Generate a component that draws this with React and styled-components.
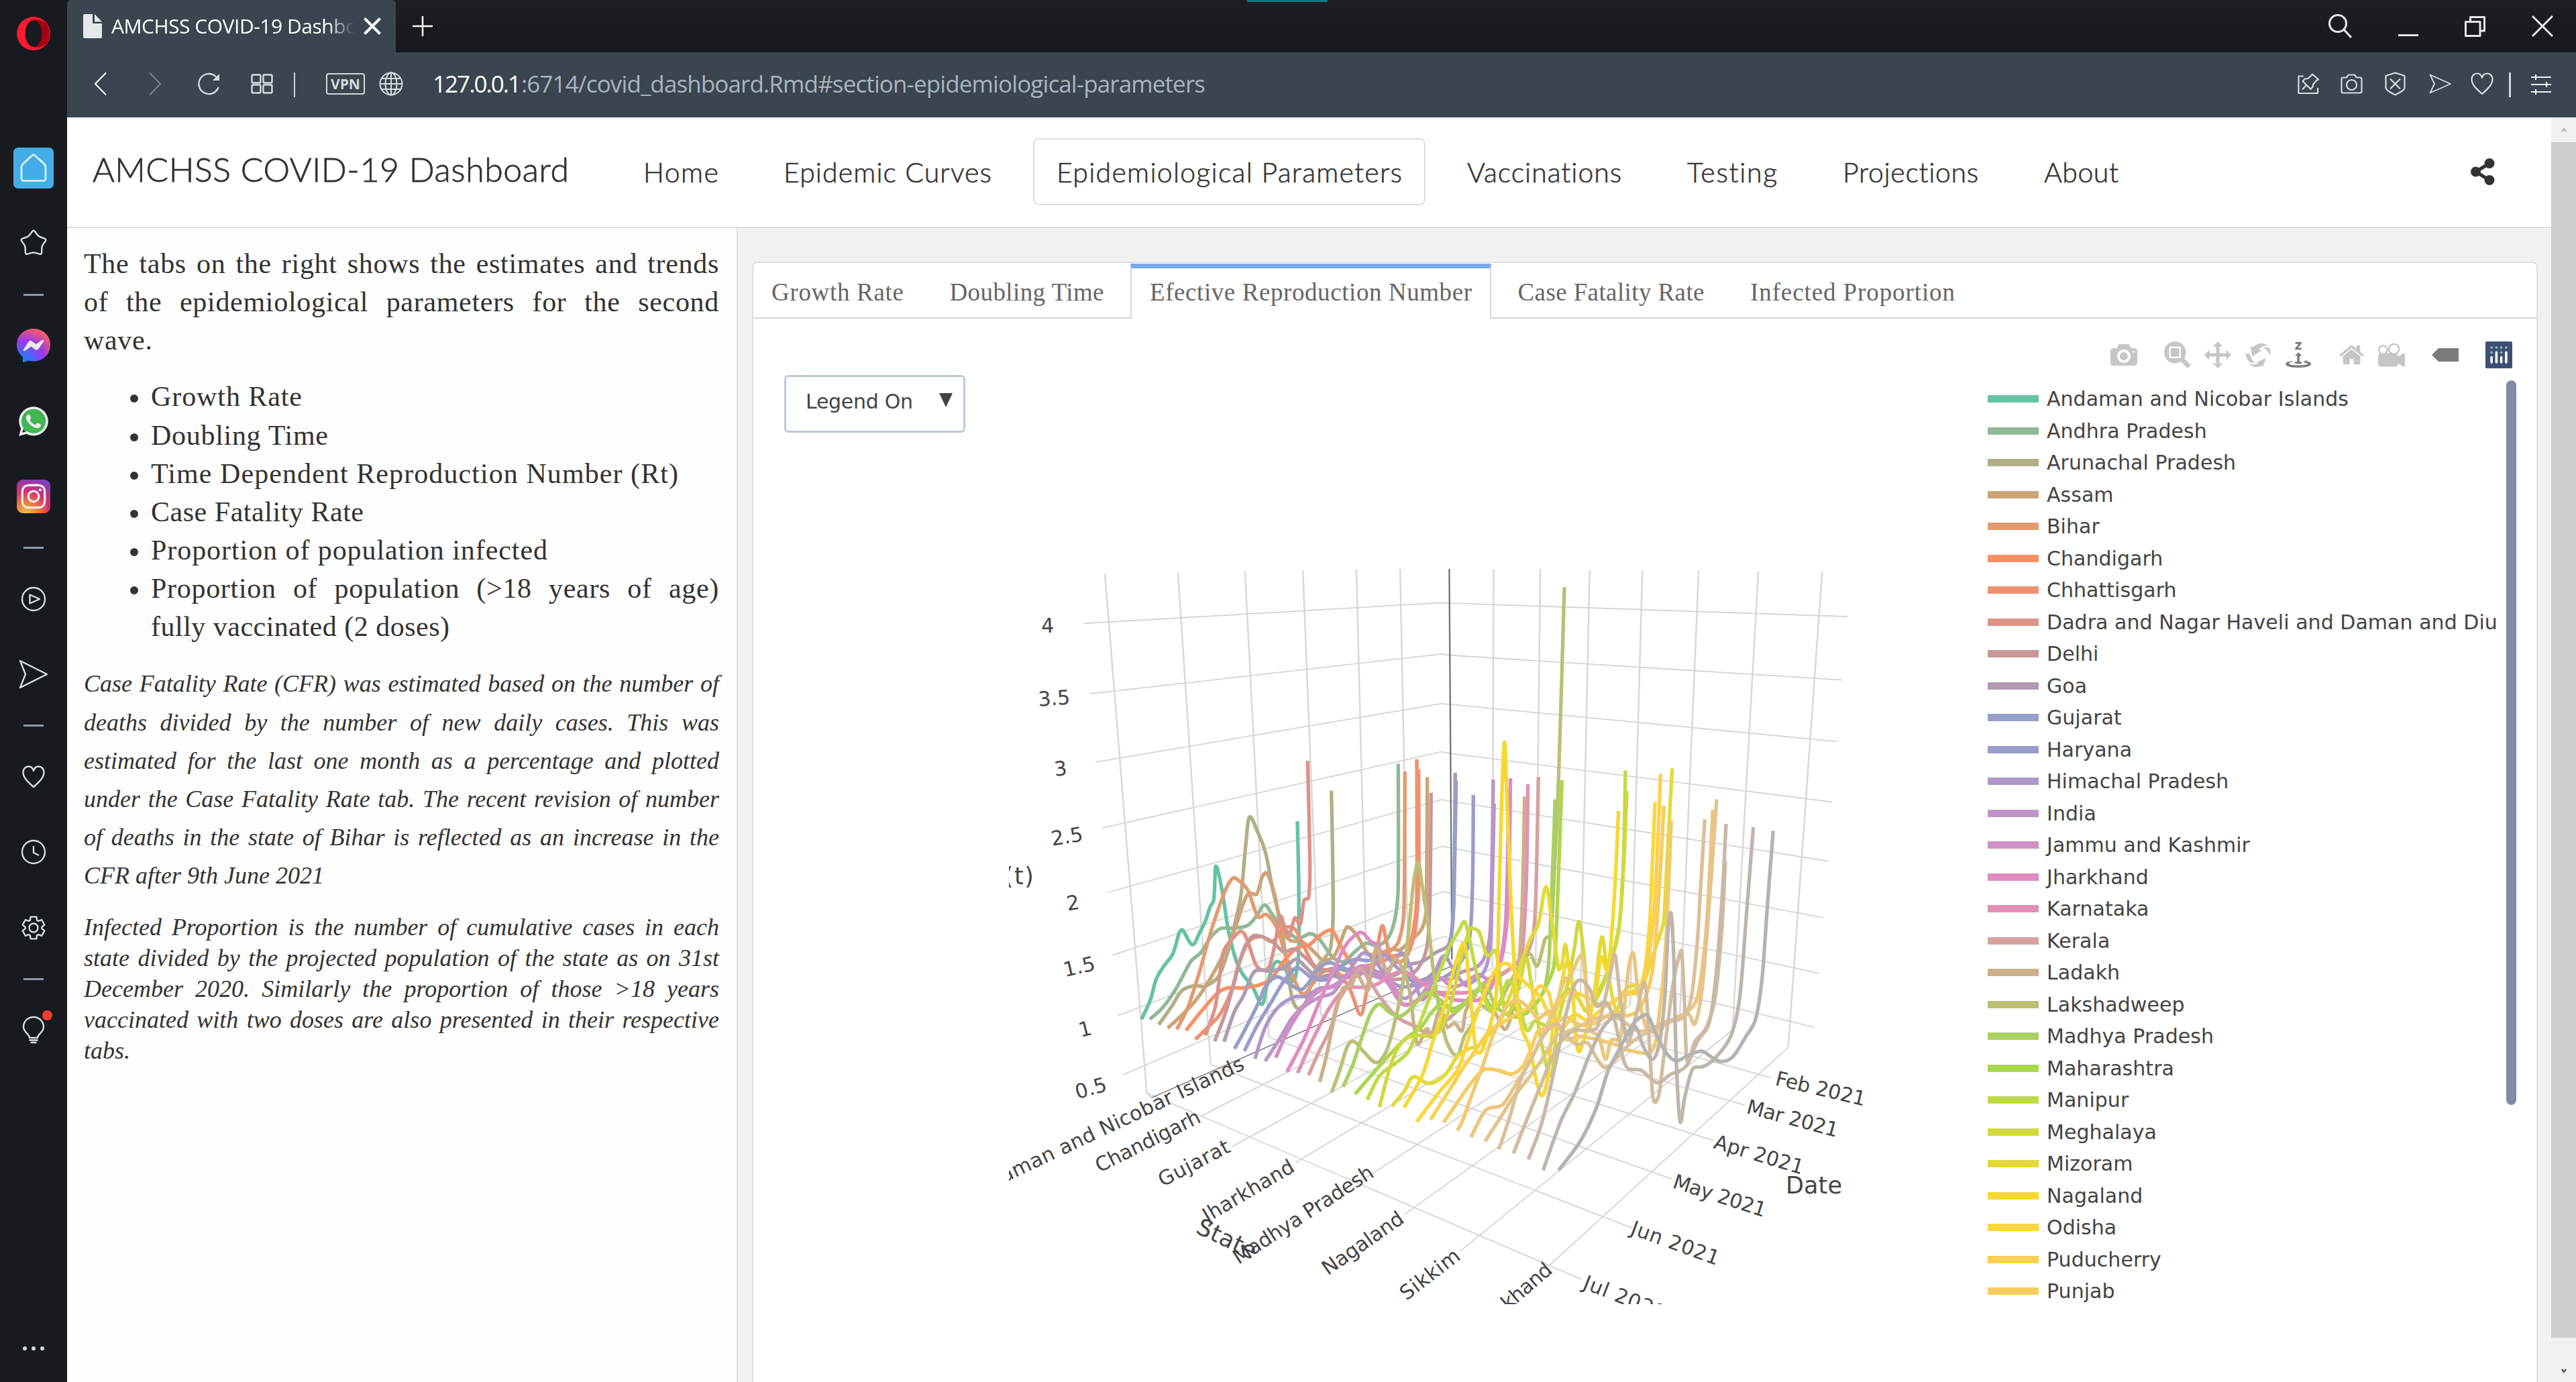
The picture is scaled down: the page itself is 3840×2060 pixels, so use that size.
import React, { useLayoutEffect, useRef, useState } from 'react';
import styled, { createGlobalStyle, css } from 'styled-components';
import { FaWhatsapp, FaInstagram } from 'react-icons/fa';

const sans = '"Open Sans", "Noto Sans", sans-serif';
const brandFont = 'Lato, "Open Sans", sans-serif';
const serif = '"Liberation Serif", serif';
const verdana = '"DejaVu Sans", sans-serif';

const Global = createGlobalStyle`
  *, *::before, *::after { box-sizing: border-box; }
  html, body { margin: 0; padding: 0; width: 3840px; height: 2060px; overflow: hidden; background: #fff; }
  svg { display: block; flex: none; }
`;

/* ---------- text that spreads its letters over a given width ---------- */

const FitText = styled.span`
  display: inline-block;
  letter-spacing: 0;
  white-space: pre;
`;

function Fit({ w, children }) {
  const ref = useRef(null);
  const [spacing, setSpacing] = useState(null);
  useLayoutEffect(() => {
    const natural = ref.current.getBoundingClientRect().width;
    setSpacing((w - natural) / (children.length - 1));
  }, [w, children]);
  return (
    <FitText ref={ref} style={spacing === null ? undefined : { letterSpacing: `${spacing}px`, width: w }}>
      {children}
    </FitText>
  );
}

/* ---------- browser frame ---------- */

const Screen = styled.div`
  display: flex;
  width: 3840px;
  height: 2060px;
  overflow: hidden;
  background: #fff;
  color: #333;
`;

const Rail = styled.aside`
  flex: none;
  width: 100px;
  display: flex;
  flex-direction: column;
  background: #171b1f;
`;

const RailLogo = styled.div`
  height: 194px;
  padding: 25px;
`;

const RailSlot = styled.div`
  position: relative;
  height: 112.5px;
  display: flex;
  align-items: center;
  justify-content: center;
`;

const RailDash = styled.div`
  height: 40px;
  display: flex;
  align-items: center;
  justify-content: center;
  &::before { content: ''; width: 30px; height: 3px; background: #8c9ba6; }
`;

const HomeTile = styled.div`
  width: 60px;
  height: 61px;
  display: flex;
  align-items: center;
  justify-content: center;
  border-radius: 7px;
  background: #45ade6;
`;

const InstaTile = styled.div`
  width: 50px;
  height: 50px;
  display: flex;
  align-items: center;
  justify-content: center;
  border-radius: 9px;
  color: #ececec;
  background: radial-gradient(circle at 28% 105%, #f5c85a 0%, #f0803a 28%, #d62f6c 55%, #8a3ab9 85%, #5b51d8 100%);
`;

const WhatsTile = styled.div`
  width: 48px;
  height: 48px;
  display: flex;
  align-items: center;
  justify-content: center;
  color: #ececec;
  background: radial-gradient(circle at 50% 50%, #3fb650 0 19px, transparent 20px);
`;

const RailDots = styled.div`
  margin-top: auto;
  height: 100px;
  display: flex;
  align-items: center;
  justify-content: center;
  gap: 7px;
`;

const RailDot = styled.span`
  width: 6px;
  height: 6px;
  border-radius: 50%;
  background: #d5dbdf;
`;

const Alert = styled.span`
  position: absolute;
  left: 63px;
  top: 27px;
  width: 15px;
  height: 15px;
  border-radius: 50%;
  background: #ff3b2f;
`;

const Window = styled.div`
  flex: 1;
  min-width: 0;
  display: flex;
  flex-direction: column;
`;

const TabStrip = styled.div`
  position: relative;
  height: 78px;
  display: flex;
  background: linear-gradient(#1c2023, #15181d);
`;

const LoadMark = styled.span`
  position: absolute;
  left: 1759px;
  top: 0;
  width: 120px;
  height: 3px;
  background: #17757c;
`;

const BrowserTab = styled.div`
  width: 490px;
  display: flex;
  align-items: center;
  padding-left: 24px;
  background: #3a4550;
  border-radius: 6px 6px 0 0;
`;

const TabTitle = styled.div`
  width: 362px;
  margin-left: 14px;
  overflow: hidden;
  font: 30px/76px ${sans};
  color: #fff;
  mask-image: linear-gradient(90deg, #000 322px, transparent 362px);
`;

const TabClose = styled.div`
  margin-left: 13px;
`;

const NewTab = styled.div`
  display: flex;
  align-items: center;
  padding-left: 25px;
`;

const WindowButtons = styled.div`
  margin-left: auto;
  display: flex;
  align-items: center;
  padding-right: 34px;
  svg + svg { margin-left: 69px; }
`;

const AddressBar = styled.div`
  height: 97px;
  display: flex;
  align-items: center;
  padding-bottom: 3px;
  background: #3a4550;
`;

const Spot = styled.div`
  margin-left: ${(p) => p.$gap}px;
  display: flex;
  align-items: center;
`;

const Divider = styled.span`
  width: ${(p) => p.$w || 2}px;
  height: 37px;
  margin-left: ${(p) => p.$gap}px;
  margin-top: 3px;
  background: #cdd3d8;
`;

const Vpn = styled.div`
  width: 58px;
  height: 32px;
  margin-left: 46px;
  border: 2px solid #d3dadb;
  border-radius: 4px;
  text-align: center;
  font: bold 21px/28px ${sans};
  color: #d3dadb;
`;

const Url = styled.div`
  margin-left: 44px;
  padding-bottom: 1px;
  font: 35px/88px ${sans};
  color: #a9b4be;
  white-space: pre;
`;

const UrlHost = styled.span`
  color: #fff;
`;

const BarTools = styled.div`
  margin-left: auto;
  display: flex;
  align-items: center;
  padding-right: 36px;
`;

/* ---------- page ---------- */

const PageRow = styled.div`
  flex: 1;
  display: flex;
  min-height: 0;
`;

const Page = styled.div`
  width: 3703px;
  display: flex;
  flex-direction: column;
`;

const ScrollTrack = styled.div`
  flex: 1;
  display: flex;
  flex-direction: column;
  background: #f0f0f0;
`;

const ScrollArrow = styled.div`
  height: ${(p) => p.$h}px;
  display: flex;
  align-items: center;
  justify-content: center;
`;

const ScrollThumb = styled.div`
  flex: 1;
  background: #cdcdcd;
`;

const Navbar = styled.header`
  height: 165px;
  display: flex;
  align-items: flex-start;
  padding: 31px 84px 0 38px;
  border-bottom: 2px solid #dcdcdc;
  background: #fff;
`;

const Brand = styled.div`
  width: 786px;
  font: 300 50px/92px ${brandFont};
  -webkit-text-stroke: 0.8px #333;
  color: #333;
`;

const NavItem = styled.a`
  height: 100px;
  margin-right: 27px;
  padding: 0 33px;
  border: 2px solid ${(p) => (p.$active ? '#dcdcdc' : 'transparent')};
  border-radius: 9px;
  font: 300 41px/97px ${brandFont};
  -webkit-text-stroke: 0.6px #333;
  color: #333;
`;

const Share = styled.div`
  margin: 30px 0 0 auto;
`;

const Body = styled.div`
  flex: 1;
  display: flex;
  min-height: 0;
  background: #f1f1f1;
`;

const Sidebar = styled.section`
  flex: none;
  width: 1000px;
  padding: 25px 26px 0 25px;
  border-right: 2px solid #e0e0e0;
  background: #fdfdfd;
  font-family: ${serif};
  color: #333;
`;

const Para = styled.p`
  margin: 0 0 25px;
  letter-spacing: 0.7px;
  font-size: 42px;
  line-height: 57.14px;
  ${(p) => p.$italic && css`
    font-style: italic;
    font-size: 36px;
    letter-spacing: 0;
  `}
  ${(p) => p.$tight && css`
    line-height: 46px;
  `}
`;

const Line = styled.span`
  display: block;
  white-space: nowrap;
  text-align-last: ${(p) => (p.$last ? 'left' : 'justify')};
`;

const Bullets = styled.ul`
  margin: 0 0 28px;
  padding: 2px 0 0 0;
  list-style: none;
`;

const Bullet = styled.li`
  display: flex;
  font-size: 42px;
  line-height: 57.14px;
  letter-spacing: 0.7px;
  &::before {
    content: '';
    flex: none;
    width: 12px;
    height: 12px;
    margin: 25px 19px 0 69px;
    border-radius: 50%;
    background: #333;
  }
`;

const BulletText = styled.div`
  flex: 1;
`;

const Panel = styled.section`
  flex: 1;
  display: flex;
  flex-direction: column;
  margin: 50px 20px 0 21px;
  border: 2px solid #e0e0e0;
  border-bottom: 0;
  border-radius: 8px 8px 0 0;
  background: #fff;
`;

const PanelTabs = styled.nav`
  display: flex;
  gap: 10.5px;
  height: 83px;
  padding-top: 1px;
  border-bottom: 2px solid #d5d5d5;
`;

const PanelTab = styled.a`
  height: 82px;
  margin-left: ${(p) => (p.$first ? -2 : 0)}px;
  padding: 0 27px;
  border: solid transparent;
  border-width: 7px 2px 0;
  font: 37px/72px ${serif};
  color: #666;
  ${(p) => p.$active && css`
    border-color: #7aa7f3 #d5d5d5 transparent;
    background: #fff;
  `}
`;

const ChartRow = styled.div`
  flex: 1;
  display: flex;
`;

const Controls = styled.div`
  width: 381px;
  padding: 84px 0 0 46px;
`;

const Dropdown = styled.div`
  width: 270px;
  height: 86px;
  display: flex;
  align-items: flex-start;
  justify-content: space-between;
  padding: 0 16px 0 29px;
  border: 3px solid #bec8d9;
  border-radius: 6px;
  font: 30px/74px ${verdana};
  color: #444;
`;

const DropArrow = styled.span`
  width: 0;
  height: 0;
  margin-top: 24px;
  border: solid transparent;
  border-width: 21px 10px 0;
  border-top-color: #444;
`;

const SceneBox = styled.div`
  width: 1459px;
  padding-top: 365px;
`;

const LegendSide = styled.div`
  flex: 1;
`;

const ModeBar = styled.div`
  height: 92px;
  display: flex;
  justify-content: flex-end;
  gap: 40px;
  padding: 34px 36px 0 0;
`;

const ModeGroup = styled.div`
  display: flex;
  gap: 20px;
`;

const LegendRow = styled.div`
  display: flex;
  justify-content: space-between;
  padding-right: 30px;
`;

const LegendList = styled.div`
  padding-top: 4px;
`;

const LegendItem = styled.div`
  height: 47.5px;
  display: flex;
  align-items: center;
  font: 30px/47px ${verdana};
  letter-spacing: 0.04px;
  color: #444;
  white-space: nowrap;
`;

const Swatch = styled.span`
  width: 76px;
  height: 11px;
  margin-right: 12px;
  background: ${(p) => p.$color};
`;

const LegendScroll = styled.div`
  width: 15px;
  height: 1080px;
  border-radius: 8px;
  background: #808ba4;
`;

/* ---------- icons ---------- */

const Glyph = ({ w, h = w, d, s = 2.4, c = '#d8dde1', children }) => (
  <svg width={w} height={h} viewBox={`0 0 ${w} ${h}`} fill="none" stroke={c} strokeWidth={s} strokeLinejoin="round">
    {d && <path d={d} />}
    {children}
  </svg>
);

const heart = 'M17 32C8 24 1.500 18 1.500 10C1.500 5 5 1.500 9.500 1.500C13 1.500 16 4 17 8C18 4 21 1.500 24.500 1.500C29 1.500 32.500 5 32.500 10C32.500 18 26 24 17 32Z';

const gear = (() => {
  const pts = [];
  for (let k = 0; k < 6; k += 1) {
    [[-24, 12.5], [-15, 17], [15, 17], [24, 12.5]].forEach(([a, r]) => {
      const t = ((k * 60 + a - 90) * Math.PI) / 180;
      pts.push(`${(19 + r * Math.cos(t)).toFixed(1)} ${(19 + r * Math.sin(t)).toFixed(1)}`);
    });
  }
  return `M${pts.join('L')}Z`;
})();

const star = (() => {
  const pts = [];
  for (let k = 0; k < 10; k += 1) {
    const r = k % 2 ? 13 : 20.5;
    const t = ((k * 36 - 90) * Math.PI) / 180;
    pts.push([22 + r * Math.cos(t), 22 + r * Math.sin(t)]);
  }
  const mid = (p, q, f) => `${(p[0] + (q[0] - p[0]) * f).toFixed(1)} ${(p[1] + (q[1] - p[1]) * f).toFixed(1)}`;
  const xy = (p) => `${p[0].toFixed(1)} ${p[1].toFixed(1)}`;
  return `${pts.map((p, i) => {
    const prev = pts[(i + 9) % 10];
    const next = pts[(i + 1) % 10];
    return `${i ? 'L' : 'M'}${mid(p, prev, 0.25)}Q${xy(p)} ${mid(p, next, 0.25)}`;
  }).join('')}Z`;
})();

const OperaLogo = () => (
  <svg width="50" height="50" viewBox="0 0 50 50">
    <circle cx="25" cy="25" r="25" fill="#ff1b2d" />
    <path d="M17 9C24 2 37 3 44 10A25 25 0 0 1 44 40C37 47 24 48 17 41Z" fill="#a70014" />
    <ellipse cx="25" cy="25" rx="12.500" ry="19.500" fill="#171b1f" />
  </svg>
);

const Messenger = () => (
  <svg width="50" height="50" viewBox="0 0 50 50">
    <defs>
      <radialGradient id="msg" cx="0.2" cy="1" r="1.150">
        <stop offset="0" stopColor="#0a8cff" />
        <stop offset="0.55" stopColor="#9a35f0" />
        <stop offset="0.85" stopColor="#e8557e" />
        <stop offset="1" stopColor="#ff6968" />
      </radialGradient>
    </defs>
    <path d="M25 0C11 0 0 10 0 24C0 31.500 3.500 37.500 9 42V49C9 50 10 50.300 11 50L16 47.500C19 48.200 22 48.500 25 48.500C39 48.500 50 38 50 24C50 10 39 0 25 0Z" fill="url(#msg)" />
    <path d="M10 31L17.500 19.500C18.700 17.700 21 17.300 22.700 18.600L28.500 23L38 17C39.500 16 41 17.500 40 19L32.500 30C31.300 31.800 29 32.200 27.300 31L21.500 26.500L12 33C10.500 33.700 9 32.500 10 31Z" fill="#ececec" />
  </svg>
);

const MODE = {
  camera: 'm500 450c-83 0-150-67-150-150 0-83 67-150 150-150 83 0 150 67 150 150 0 83-67 150-150 150z m400 150h-120c-16 0-34 13-39 29l-31 93c-6 15-23 28-40 28h-340c-16 0-34-13-39-28l-31-94c-6-15-23-28-40-28h-120c-55 0-100-45-100-100v-450c0-55 45-100 100-100h800c55 0 100 45 100 100v450c0 55-45 100-100 100z m-400-550c-138 0-250 112-250 250 0 138 112 250 250 250 138 0 250-112 250-250 0-138-112-250-250-250z m365 380c-19 0-35 16-35 35 0 19 16 35 35 35 19 0 35-16 35-35 0-19-16-35-35-35z',
  zoom: 'm1000-25l-250 251c40 63 63 138 63 218 0 224-182 406-407 406-224 0-406-182-406-406s183-406 407-406c80 0 155 22 218 62l250-250 125 125z m-812 250l0 438 437 0 0-438-437 0z m62 375l313 0 0-312-313 0 0 312z',
  pan: 'm1000 350l-187 188 0-125-250 0 0 250 125 0-188 187-187-187 125 0 0-250-250 0 0 125-188-188 186-187 0 125 252 0 0-250-125 0 187-188 188 188-125 0 0 250 250 0 0-126 187 188z',
  orbit: 'm922 660c-5 4-9 7-14 11-359 263-580-31-580-31l-102 28 58-400c0 1 1 1 2 2 118 108 351 249 351 249s-62 27-100 42c88 83 222 183 347 122 16-8 30-17 44-27-2 1-4 2-6 4z m36-329c0 0 64 229-88 296-62 27-124 14-175-11 157-78 225-208 249-266 8-19 11-31 11-31 2 5 6 15 11 32-5-13-8-20-8-20z m-775-239c70-31 117-50 198-32-121 80-199 346-199 346l-96-15-58-12c0 0 55-226 155-287z m603 133l-317-139c0 0 4-4 19-14 7-5 24-15 24-15s-177-147-389 4c235-287 536-112 536-112l31-22 100 299-4-1z m-298-153c6-4 14-9 24-15 0 0-17 10-24 15z',
  turntable: 'm833 5l-17 108v41l-130-65 130-66c0 0 0 38 0 39 0-1 36-14 39-25 4-15-6-22-16-30-15-12-39-16-56-20-90-22-187-23-279-23-261 0-341 34-353 59 3 60 228 110 228 110-140-8-351-35-351-116 0-120 293-142 474-142 155 0 477 22 477 142 0 50-74 79-163 96z m-374 94c-58-5-99-21-99-40 0-24 65-43 144-43 79 0 143 19 143 43 0 19-42 34-98 40v216h87l-132 135-133-135h88v-216z m167 515h-136v1c16 16 31 34 46 52l84 109v54h-230v-71h124v-1c-16-17-28-32-44-51l-89-114v-51h245v72z',
  home: 'm786 296v-267q0-15-11-26t-25-10h-214v214h-143v-214h-214q-15 0-25 10t-11 26v267q0 1 0 2t0 2l321 264 321-264q1-1 1-4z m124 39l-34-41q-5-5-12-6h-2q-7 0-12 3l-386 322-386-322q-7-4-13-4-7 2-12 7l-35 41q-4 5-3 13t6 12l401 334q18 15 42 15t43-15l136-114v109q0 8 5 13t13 5h107q8 0 13-5t5-13v-227l122-102q5-5 6-12t-4-13z',
  movie: 'm938 413l-188-125c0 37-17 71-44 94 64 38 107 107 107 187 0 121-98 219-219 219-121 0-219-98-219-219 0-61 25-117 66-156h-115c30 33 49 76 49 125 0 103-84 187-187 187s-188-84-188-187c0-57 26-107 65-141-38-22-65-62-65-109v-250c0-70 56-126 125-126h500c69 0 125 56 125 126l188-126c34 0 62 28 62 63v375c0 35-28 63-62 63z m-750 0c-69 0-125 56-125 125s56 125 125 125 125-56 125-125-56-125-125-125z m406-1c-87 0-157 70-157 157 0 86 70 156 157 156s156-70 156-156-70-157-156-157z',
  tag: 'm375 725l0 0-375-375 375-374 0-1 1125 0 0 750-1125 0z',
};

const ModeIcon = ({ name, vw = 1000, w = 40, on }) => (
  <svg width={w} height="40" viewBox={`0 0 ${vw} 1000`}>
    <path d={MODE[name]} transform="matrix(1 0 0 -1 0 850)" fill={on ? '#7c7c7c' : '#c6c6c6'} />
  </svg>
);

const PlotlyMark = () => (
  <svg width="40" height="40" viewBox="0 0 132 132">
    <rect width="132" height="132" rx="6" fill="#3f4f75" />
    <g fill="#80cfbe">
      {[[30, 30], [54, 30], [78, 30], [102, 30], [30, 54], [78, 54]].map(([x, y]) => (
        <circle key={`${x}-${y}`} cx={x} cy={y} r="6" />
      ))}
    </g>
    <g stroke="#fff" strokeWidth="12" strokeLinecap="round">
      <path d="M30 78V102M54 54V102M78 78V102M102 54V102" />
    </g>
  </svg>
);

/* ---------- 3D scene ---------- */

// Screen frames of the scene: origin and scale of each set of coordinates.
const FRAMES = {
  a: [1680, 1120, 1 / 3, 1 / 3],
  b: [2180, 1120, 1 / 3, 640 / 1568],
  c: [1480, 820, 700 / 1568, 1150 / 1568],
  d: [2130, 820, 700 / 1568, 1150 / 1568],
};

const place = (frame, text) => {
  const [ox, oy, sx, sy] = FRAMES[frame];
  return text.trim().split(/\s+/).map((p) => {
    const [u, v] = p.split(',').map(Number);
    return [ox + u * sx, oy + v * sy];
  });
};

const points = (spec) =>
  spec.split('|').flatMap((part) => place(part.trim()[0], part.trim().slice(1)));

const straight = (spec) => `M${points(spec).map((p) => p.map((n) => n.toFixed(1)).join(' ')).join('L')}`;

const smooth = (spec) => {
  const p = points(spec);
  let d = `M${p[0][0].toFixed(1)} ${p[0][1].toFixed(1)}`;
  for (let i = 0; i < p.length - 1; i += 1) {
    const p0 = p[i - 1] || p[i];
    const p1 = p[i];
    const p2 = p[i + 1];
    const p3 = p[i + 2] || p2;
    const len = Math.hypot(p2[0] - p1[0], p2[1] - p1[1]);
    const tan = (m, n) => {
      const l = Math.hypot(n[0] - m[0], n[1] - m[1]) || 1;
      const k = Math.min(l / 6, len / 2.6) / l;
      return [(n[0] - m[0]) * k, (n[1] - m[1]) * k];
    };
    const t1 = tan(p0, p2);
    const t2 = tan(p1, p3);
    d += `C${(p1[0] + t1[0]).toFixed(1)} ${(p1[1] + t1[1]).toFixed(1)} ${(p2[0] - t2[0]).toFixed(1)} ${(p2[1] - t2[1]).toFixed(1)} ${p2[0].toFixed(1)} ${p2[1].toFixed(1)}`;
  }
  return d;
};

const WALL_LINES = [
  'c 374,48 514,1103', 'c 618,45 727,1045', 'c 842,43 922,990', 'c 1035,41 1095,945', 'c 1214,40 1250,905', 'c 1360,38 1388,868',
  'd 216,38 212,850', 'd 372,38 356,875', 'd 537,40 506,899', 'd 713,41 672,926', 'd 901,41 838,948', 'd 1100,43 1014,975', 'd 1313,44 1200,1010',
];

const LEVEL_LINES = [
  'c 303,149 1495,107 | d 80,108 1397,135',
  'c 323,292 1500,211 | d 80,214 1380,264',
  'c 343,431 1497,312 | d 80,314 1363,389',
  'c 363,565 1498,410 | d 80,414 1347,512',
  'c 382,696 1500,507 | d 80,511 1333,632',
  'c 400,823 1502,602 | d 80,606 1317,747',
  'c 418,946 1504,694 | d 80,699 1302,860',
  'c 436,1066 1506,785 | d 80,791 1288,970',
];

const FLOOR_LINES = [
  'c 514,1103 | d 510,1482', 'c 727,1045 | d 680,1378', 'c 922,990 | d 812,1278', 'c 1095,945 | d 950,1200',
  'c 1250,905 | d 1055,1128', 'c 1388,868 | d 1140,1072',
  'c 696,1150 | d 212,850', 'c 800,1212 | d 356,875', 'c 1012,1244 | d 506,899', 'c 1235,1280 | d 672,926',
  'c 1375,1350 | d 838,948', 'd 104,1425 1014,975', 'd 400,1455 1200,1010',
];

const SERIES = [
  ['Andaman and Nicobar Islands', '#66c2a5', 'a 65,1198 105,1110 130,1020 165,960 205,905 235,808 250,800 292,865 325,810 350,760 372,695 388,665 396,515 405,525 430,650 455,810 490,940 520,1000 560,1050 603,1132 625,1050 655,955 675,940 700,960 738,1028 755,1000 768,900 768,600 762,312'],
  ['Andhra Pradesh', '#90b998', 'a 102,1198 160,1145 220,1060 285,940 330,900 375,830 420,792 480,790 540,778 580,735 615,687 650,730 690,780 760,835 820,815 860,840 920,920 970,940 1020,895 1070,858 1120,868 1170,830 1200,740 1213,600 1213,55'],
  ['Arunachal Pradesh', '#b2ae86', 'a 142,1222 200,1140 245,1070 300,1048 350,1050 410,1005 450,900 480,780 510,640 530,430 547,295 580,350 620,455 650,610 690,780 715,960 740,1110 765,1150 800,1120 840,980 880,930 910,880 922,700 914,176'],
  ['Assam', '#cca478', 'a 182,1238 250,1175 310,1110 370,1020 430,910 480,800 520,680 545,633 580,638 605,560 625,545 660,640 690,790 730,845 780,850 830,890 880,935 930,910 975,800 990,785 1030,825 1080,905 1130,900 1190,885 1220,888 1270,845 1320,790 1338,700 1343,115'],
  ['Bihar', '#e29b70', 'a 222,1243 270,1150 320,1000 380,790 440,620 470,570 490,570 540,620 585,740 625,730 670,790 700,880 740,1000 785,1085 830,1040 870,990 920,980 980,1010 1040,1000 1100,950 1180,890 1215,850 1238,720 1243,90'],
  ['Chandigarh', '#fa8f64', 'a 264,1248 330,1165 400,1085 450,1058 520,1058 600,1042 650,1010 700,940 760,878 810,870 860,825 915,800 950,860 990,930 1030,985 1070,960 1130,945 1190,915 1250,900 1280,800 1296,650 1296,35'],
  ['Chhattisgarh', '#ec9173', 'a 306,1288 360,1235 420,1170 470,1060 500,950 545,850 600,828 650,850 700,792 750,795 790,870 840,960 900,980 960,1010 1000,1070 1045,1178 1075,1060 1110,930 1140,782 1160,850 1185,935 1240,930 1285,820 1304,600 1304,80'],
  ['Dadra and Nagar Haveli and Daman and Diu', '#dc9386', 'a 350,1270 395,1140 430,900 470,840 512,805 540,850 580,960 630,972 660,870 685,738 705,790 725,828 750,745 775,772 792,665 812,655 818,500 808,42'],
  ['Delhi', '#c79799', 'a 392,1296 440,1170 480,1030 520,890 560,828 600,828 655,855 700,895 750,885 800,925 860,980 930,970 1000,985 1060,975 1130,1000 1200,1020 1270,1000 1320,940 1345,850 1355,650 1360,185'],
  ['Goa', '#b09bb1', 'a 434,1298 480,1165 520,1095 570,985 640,982 700,970 755,930 800,965 850,1010 910,1000 960,1015 1020,1000 1080,985 1150,990 1200,1000 1260,955 1320,940 1380,900 1440,860 1460,700 1468,95'],
  ['Gujarat', '#959fc7', 'a 481,1330 530,1240 590,1120 620,1050 670,1008 720,1035 780,1065 830,1010 870,960 910,945 970,970 1050,990 1130,1000 1220,1050 1300,1040 1380,980 1440,890 1460,700 1472,130'],
  ['Haryana', '#9a9dca', 'a 525,1340 580,1230 640,1130 700,1030 760,968 830,1015 900,1018 960,960 1020,930 1080,935 1150,910 1200,960 1300,1040 1400,1020 1480,960 1530,850 1545,600 1549,195'],
  ['Himachal Pradesh', '#ae98c9', 'a 572,1375 620,1230 680,1140 750,1098 800,1095 860,1060 920,1050 980,1000 1050,905 1100,925 1150,985 1190,950 1230,900 1270,970 1320,1110 1370,1010 1415,915 1460,975 1510,1045 | b 40,845 100,800 125,700 142,190'],
  ['India', '#be94c6', 'a 618,1385 680,1290 740,1190 800,1135 860,1100 920,1080 980,1010 1050,990 1120,1010 1180,1040 1240,1105 1300,1060 1370,1010 1440,1020 | b 0,805 60,790 100,750 125,650 138,102'],
  ['Jammu and Kashmir', '#d08fc5', 'a 665,1370 720,1250 790,1140 860,1070 930,1050 990,1000 1045,960 1110,980 1170,1040 1230,1130 1300,1110 1380,1010 1450,1050 | b 0,850 70,815 120,830 170,760 195,600 208,140'],
  ['Jharkhand', '#e08bc4', 'a 715,1433 790,1290 860,1120 920,990 970,880 1010,830 1050,810 1090,850 1125,870 1150,960 1200,1060 1235,1130 1300,1115 1380,1080 1460,1110 | b 30,910 80,905 130,860 180,740 205,550 215,98'],
  ['Karnataka', '#e291b4', 'a 763,1438 830,1290 910,1140 980,1060 1050,1055 1120,1040 1180,1000 1240,985 1300,1020 1370,1070 1440,1080 | b 30,880 90,865 150,830 220,790 265,740 285,500 293,120'],
  ['Kerala', '#d8a1a0', 'a 812,1448 860,1340 910,1240 940,1130 980,1060 1040,970 1080,1020 1140,1110 1210,1190 1290,1230 1350,1262 1420,1210 1500,1140 | b 40,900 90,850 180,810 250,770 300,720 325,600 340,93'],
  ['Ladakh', '#cbb08a', 'a 862,1478 890,1370 930,1180 965,1060 1000,1050 1030,1000 1075,1070 1090,990 1115,875 1140,940 1170,985 1200,925 1240,990 1265,1080 1285,1240 1302,1310 1340,1240 1360,1275 1400,1150 1430,1230 1465,1215 1498,1250 1515,1160 | b 50,900 80,870 120,930 150,960 190,1015 220,960 250,800 268,550 278,165'],
  ['Lakshadweep', '#bcc076', 'a 915,1525 950,1430 985,1320 1015,1297 1060,1345 1115,1392 1160,1340 1190,1240 1230,1060 1255,850 1280,600 1302,495 1320,600 1350,800 1370,980 1400,1170 1430,1300 1475,1360 1510,1270 | b 40,1000 80,930 140,950 190,880 250,790 300,740 335,783 370,685 395,670 410,450 430,100 456,-600'],
  ['Madhya Pradesh', '#abd062', 'a 966,1500 1010,1400 1050,1280 1090,1170 1130,1130 1170,1165 1220,1185 1270,1150 1340,1080 1400,1110 1460,1150 | b 40,900 100,850 150,930 230,970 300,945 360,880 385,780 400,500 415,175'],
  ['Maharashtra', '#a9d84c', 'a 1020,1532 1100,1440 1180,1350 1250,1280 1310,1240 1360,1170 1410,1130 1470,1165 | b 40,890 80,870 130,930 200,920 270,960 330,920 380,850 410,780 425,550 445,105'],
  ['Manipur', '#bedc45', 'a 1074,1558 1130,1450 1200,1395 1260,1340 1300,1240 1350,1110 1400,980 1440,880 1485,800 1512,765 | b 40,720 70,830 120,940 160,930 200,840 230,860 265,960 290,1020 325,985 380,1000 420,940 470,870 520,905 560,950 620,870 660,780 700,650 720,400 729,70'],
  ['Meghalaya', '#d0d83e', 'a 1129,1591 1180,1400 1230,1300 1290,1270 1370,1270 1420,1210 1460,1080 1500,900 1530,800 | b 40,645 75,660 110,745 150,730 175,880 200,960 250,870 285,755 310,860 340,1000 370,1130 400,1180 425,1000 470,850 500,720 522,622 545,760 565,940 600,890 650,800 700,640 722,400 735,143'],
  ['Mizoram', '#e3da38', 'a 1184,1587 1240,1520 1280,1455 1350,1485 1420,1450 1480,1360 1540,1325 | b 60,1085 100,1050 160,1000 210,900 260,780 300,690 340,630 373,495 400,620 430,795 445,780 460,705 475,780 500,870 560,950 590,880 622,680 645,780 685,940 720,880 760,855 800,865 850,750 875,690 900,620 915,400 938,62'],
  ['Nagaland', '#f6d831', 'a 1239,1593 1320,1450 1370,1290 1420,1140 1460,980 1500,862 | b 15,720 40,930 60,1090 80,1100 110,1040 150,900 165,500 175,200 188,-34 200,200 220,600 240,880 265,1010 300,1080 330,1200 355,1258 380,1200 400,1040 440,860 470,765 490,850 510,1060 525,1095 560,1000 600,860 620,750 650,800 670,640 685,450 698,217'],
  ['Odisha', '#fcd73b', 'b -205,1353 -100,1240 -20,1160 30,1040 100,880 150,795 200,775 250,820 300,860 350,900 400,980 450,1010 500,960 560,980 640,930 720,890 800,850 835,650 850,400 861,185'],
  ['Puducherry', '#fad04f', 'b -143,1345 -60,1240 0,1160 60,1090 120,1020 180,990 240,960 300,930 340,860 385,880 410,940 480,880 560,900 640,930 720,890 800,870 850,650 870,400 886,82'],
  ['Punjab', '#f6cc62', 'b -84,1355 0,1255 50,1200 100,1162 160,1165 220,1178 270,1150 310,1080 340,1020 400,1010 460,970 530,1000 600,990 680,950 740,965 800,930 850,800 880,500 901,198'],
  ['Rajasthan', '#f1c972', 'b -23,1385 0,1350 40,1260 90,1150 140,1030 200,930 250,910 300,940 340,975 400,950 460,1050 520,1040 590,1050 680,1070 760,1095 850,1090 880,960 910,700 934,252'],
  ['Sikkim', '#ebc681', 'b 38,1409 105,1310 180,1290 250,1200 310,1120 360,1030 410,940 460,830 480,830 500,790 535,748 555,880 575,1020 610,1040 640,1125 665,1055 705,1050 745,780 765,738 790,900 830,1020 900,1000 960,970 1010,950 1050,900 1085,700 1105,450 1120,213'],
  ['Tamil Nadu', '#e4c48c', 'b 101,1424 160,1350 230,1260 280,1210 360,1120 420,1040 480,1020 560,990 620,970 700,975 780,1020 850,1010 940,980 1010,960 1040,995 1070,880 1100,600 1137,175'],
  ['Telangana', '#dbc098', 'b 163,1453 210,1340 260,1200 310,1120 370,1030 420,995 470,1040 510,1070 560,1065 600,1120 640,1155 690,1120 760,1060 840,1020 900,990 990,970 1025,890 1050,700 1065,500 1084,248'],
  ['Tripura', '#d1bca0', 'b 228,1469 290,1340 340,1240 400,1120 440,1060 500,1020 560,1020 600,1010 630,930 665,800 683,745 710,930 738,1062 775,970 815,845 835,1050 850,1250 862,1282 880,1250 910,1050 940,860 965,760 980,730 992,900 1005,1130 1040,1060 1090,1010 1130,900 1160,650 1176,400'],
  ['Uttar Pradesh', '#c8b9a6', 'b 295,1490 350,1370 390,1240 430,1090 460,970 500,855 530,835 570,870 600,930 640,915 680,980 715,1110 740,1158 800,1165 870,1210 930,1180 1000,1150 1050,1060 1100,1000 1130,850 1160,550 1179,265'],
  ['Uttarakhand', '#beb6ab', 'b 361,1530 440,1350 500,1250 570,1105 620,1020 660,980 700,965 740,1035 775,1005 810,1080 850,1125 880,1070 905,900 920,650 933,592 945,750 955,1100 973,1350 995,1260 1030,1160 1080,1150 1130,1120 1200,1040 1240,900 1270,600 1301,276'],
  ['West Bengal', '#b3b3b3', 'b 430,1530 530,1420 600,1300 650,1170 700,1090 760,1000 800,968 830,965 870,1040 920,1110 960,1130 1010,1110 1070,1095 1120,1120 1160,1133 1210,1115 1265,1045 1310,980 1340,830 1365,550 1390,290'],
];

const LEVEL_LABELS = [
  ['4', 1562, 943, -2], ['3.5', 1572, 1051, -4], ['3', 1582, 1156, -6], ['2.5', 1592, 1257, -9],
  ['2', 1601, 1356, -9], ['1.5', 1611, 1451, -13], ['1', 1620, 1544, -14], ['0.5', 1629, 1632, -16],
];

// text, x, y of the end of the baseline, angle, length
const STATE_LABELS = [
  ['Andaman and Nicobar Islands', 1857, 1593, -25.3, 458],
  ['Chandigarh', 1792, 1672, -26.5, 171],
  ['Gujarat', 1836, 1716, -27.5, 116],
  ['Jharkhand', 1932, 1745, -30.5, 153],
  ['Madhya Pradesh', 2050, 1753, -33, 243],
  ['Nagaland', 2095, 1821, -35, 141],
  ['Sikkim', 2179, 1876, -37.5, 104],
  ['Uttarakhand', 2316, 1896, -40.5, 178],
];

// text, x, y of the start of the baseline, angle, length
const DATE_LABELS = [
  ['Feb 2021', 2645, 1617, 13.4, 137],
  ['Mar 2021', 2602, 1659, 15, 140],
  ['Apr 2021', 2553, 1711, 16.7, 138],
  ['May 2021', 2492, 1770, 18, 144],
  ['Jun 2021', 2429, 1839, 20, 138],
  ['Jul 2021', 2358, 1920, 21.5, 130],
];

const SceneText = styled.text`
  font-family: ${verdana};
  font-size: ${(p) => p.$size || 30}px;
  fill: #444;
`;

const Scene = () => (
  <svg width="1370" height="1104" viewBox="1504 840 1370 1104" overflow="hidden" fill="none">
    <g stroke="#d9d9d9" strokeWidth="2.6">{WALL_LINES.map((l) => <path key={l} d={straight(l)} />)}</g>
    <g stroke="#d4d4d4" strokeWidth="1.800">
      {LEVEL_LINES.map((l) => <path key={l} d={straight(l)} />)}
      {FLOOR_LINES.map((l) => <path key={l} d={straight(l)} />)}
    </g>
    <path d={straight('c 514,1103 530,1113')} stroke="#d4d4d4" strokeWidth="2" />
    <path d={straight('c 530,1113 | d 77,845')} stroke="#555" strokeWidth="1.200" />
    <path d={straight('d 68,38 77,832')} stroke="#777" strokeWidth="2.4" />
    {LEVEL_LABELS.map(([t, x, y, r]) => (
      <SceneText key={t} textAnchor="middle" transform={`translate(${x} ${y}) rotate(${r})`}>{t}</SceneText>
    ))}
    {STATE_LABELS.map(([t, x, y, r, w]) => (
      <SceneText key={t} x={-w} textLength={w} transform={`translate(${x} ${y}) rotate(${r})`}>{t}</SceneText>
    ))}
    {DATE_LABELS.map(([t, x, y, r, w]) => (
      <SceneText key={t} textLength={w} transform={`translate(${x} ${y}) rotate(${r})`}>{t}</SceneText>
    ))}
    <SceneText $size={35} textLength="70" x="1471" y="1318">R(t)</SceneText>
    <SceneText $size={35} textLength="95" transform="translate(1781 1837) rotate(25.500)">State</SceneText>
    <SceneText $size={35} textLength="84" x="2662" y="1779">Date</SceneText>
    <g strokeWidth="5.400">
      {SERIES.map(([name, color, spec]) => <path key={name} d={smooth(spec)} stroke={color} />)}
    </g>
  </svg>
);

/* ---------- content ---------- */

const NAV = [
  ['Home', 112], ['Epidemic Curves', 310], ['Epidemiological Parameters', 515], ['Vaccinations', 231],
  ['Testing', 135], ['Projections', 203], ['About', 111],
];

const TABS = [
  ['Growth Rate', 197], ['Doubling Time', 230], ['Efective Reproduction Number', 480],
  ['Case Fatality Rate', 278], ['Infected Proportion', 305],
];

const INTRO = [
  'The tabs on the right shows the estimates and trends',
  'of the epidemiological parameters for the second',
  'wave.',
];

const BULLETS = [
  [['Growth Rate', 225]],
  [['Doubling Time', 264]],
  [['Time Dependent Reproduction Number (Rt)', 786]],
  [['Case Fatality Rate', 317]],
  [['Proportion of population infected', 591]],
  [['Proportion of population (>18 years of age)'], ['fully vaccinated (2 doses)', 445]],
];

const CFR = [
  'Case Fatality Rate (CFR) was estimated based on the number of',
  'deaths divided by the number of new daily cases. This was',
  'estimated for the last one month as a percentage and plotted',
  'under the Case Fatality Rate tab. The recent revision of number',
  'of deaths in the state of Bihar is reflected as an increase in the',
  'CFR after 9th June 2021',
];

const INFECTED = [
  'Infected Proportion is the number of cumulative cases in each',
  'state divided by the projected population of the state as on 31st',
  'December 2020. Similarly the proportion of those >18 years',
  'vaccinated with two doses are also presented in their respective',
  'tabs.',
];

const lines = (list) => list.map((t, i) => <Line key={t} $last={i === list.length - 1}>{t}</Line>);

function SideRail() {
  return (
    <Rail>
      <RailLogo><OperaLogo /></RailLogo>
      <RailSlot>
        <HomeTile><Glyph w={40} h={44} s={2.6} c="#e8f5fd" d="M20 2.500C21 2.500 36 16 37 18Q38 19 38 21V38Q38 41.500 34 41.500H6Q2 41.500 2 38V21Q2 19 3 18C4 16 19 2.500 20 2.500Z" /></HomeTile>
      </RailSlot>
      <RailSlot><Glyph w={44} d={star} /></RailSlot>
      <RailDash />
      <RailSlot><Messenger /></RailSlot>
      <RailSlot><WhatsTile><FaWhatsapp size={50} /></WhatsTile></RailSlot>
      <RailSlot><InstaTile><FaInstagram size={42} /></InstaTile></RailSlot>
      <RailDash />
      <RailSlot><Glyph w={38} d="M13.500 12.500V25.500L28 19Z"><circle cx="19" cy="19" r="17" /></Glyph></RailSlot>
      <RailSlot><Glyph w={44} d="M2 2L42 22L2 42L10 22Z" /></RailSlot>
      <RailDash />
      <RailSlot><Glyph w={34} h={34} d={heart} /></RailSlot>
      <RailSlot><Glyph w={38} d="M19 10V20L27 24"><circle cx="19" cy="19" r="17" /></Glyph></RailSlot>
      <RailSlot><Glyph w={38} d={gear}><circle cx="19" cy="19" r="6.500" /></Glyph></RailSlot>
      <RailDash />
      <RailSlot>
        <Glyph w={34} h={42} d="M11 33C11 27 2 25 2 16.500A15 14.500 0 0 1 32 16.500C32 25 23 27 23 33ZM10.500 36.500H23.500M12.500 40H21.500" />
        <Alert />
      </RailSlot>
      <RailDots><RailDot /><RailDot /><RailDot /></RailDots>
    </Rail>
  );
}

function BrowserChrome() {
  return (
    <>
      <TabStrip>
        <BrowserTab>
          <svg width="28" height="36" viewBox="0 0 28 36" fill="#e6e9ec">
            <path d="M2 0H14V14H28V34Q28 36 26 36H2Q0 36 0 34V2Q0 0 2 0Z" />
            <path d="M17 0L28 11.500H17Z" />
          </svg>
          <TabTitle><Fit w={413}>AMCHSS COVID-19 Dashboard</Fit></TabTitle>
          <TabClose><Glyph w={28} s={4} c="#fff" d="M2.500 2.500L25.500 25.500M25.500 2.500L2.500 25.500" /></TabClose>
        </BrowserTab>
        <NewTab><Glyph w={30} s={2.5} c="#fff" d="M0 15H30M15 0V30" /></NewTab>
        <LoadMark />
        <WindowButtons>
          <Glyph w={36} h={38} s={3.2} c="#dfe3e6" d="M24 24L35 36"><circle cx="15" cy="15" r="12.500" /></Glyph>
          <Glyph w={30} h={30} s={3} c="#e4e7e9" d="M0 28.500H30" />
          <Glyph w={31} h={31} s={3} c="#e4e7e9" d="M1.500 8.500H23V29.500H1.500ZM8.500 8.500V1.500H29.500V22H23" />
          <Glyph w={32} h={32} s={3} c="#e4e7e9" d="M1 1L31 31M31 1L1 31" />
        </WindowButtons>
      </TabStrip>
      <AddressBar>
        <Spot $gap={40}><Glyph w={20} h={36} c="#fff" s={2.2} d="M18 1.500L2 18L18 34.500" /></Spot>
        <Spot $gap={61}><Glyph w={20} h={36} c="#77818b" s={2.2} d="M2 1.500L18 18L2 34.500" /></Spot>
        <Spot $gap={53}>
          <Glyph w={34} h={34} d="M31.500 22A15 15 0 1 1 28 6.500"><path d="M33 2V12H23Z" fill="#d8dde1" stroke="none" /></Glyph>
        </Spot>
        <Spot $gap={46}>
          <Glyph w={33} h={30}>
            {[[1.5, 1.5], [18.5, 1.5], [1.5, 16.5], [18.5, 16.5]].map(([x, y]) => (
              <rect key={`${x}-${y}`} x={x} y={y} width="13" height="12" rx="1.500" />
            ))}
          </Glyph>
        </Spot>
        <Divider $gap={31} />
        <Vpn>VPN</Vpn>
        <Spot $gap={21}>
          <Glyph w={36} h={36} s={2} d="M1.500 18H34.500M4.500 10H31.500M4.500 26H31.500M18 1.500V34.500">
            <circle cx="18" cy="18" r="16.500" />
            <ellipse cx="18" cy="18" rx="8.500" ry="16.500" />
          </Glyph>
        </Spot>
        <Url>
          <UrlHost><Fit w={132}>127.0.0.1</Fit></UrlHost>
          <Fit w={1020}>:6714/covid_dashboard.Rmd#section-epidemiological-parameters</Fit>
        </Url>
        <BarTools>
          <Glyph w={32} h={32} s={2.2} d="M9 4.500H1.500V30H30V22M22 1.500L31 9.500L28 11L23 17V19.500L19.500 24L7.600 12L11 8.500L15.500 8L20 4ZM13.500 17.500L7 24.500" />
          <Spot $gap={32}><Glyph w={33} h={30} s={2.2} d="M1.500 8Q1.500 5.500 4 5.500H9L12 1.500H21L24 5.500H29Q31.500 5.500 31.500 8V26Q31.500 28.500 29 28.500H4Q1.500 28.500 1.500 26Z"><circle cx="16.500" cy="16.500" r="7.500" /></Glyph></Spot>
          <Spot $gap={33}><Glyph w={31} h={36} s={2.2} d="M15.500 1.500L29.500 6V24Q29 28 15.500 34.500Q2 28 1.500 24V6ZM8 10.500L23 25.500M23 10.500L8 25.500" /></Spot>
          <Spot $gap={35}><Glyph w={33} h={30} s={1.8} d="M1.500 1.500L32 15L1.500 28.500L8 15Z" /></Spot>
          <Spot $gap={29}><Glyph w={34} h={34} s={2.2} d={heart} /></Spot>
          <Divider $gap={23} $w={3} />
          <Spot $gap={30}><Glyph w={31} h={31} s={2.2} c="#eef0f2" d="M0 5H30M0 16H30M0 27H30M7 1V9M23 12V20M7 23V31" /></Spot>
        </BarTools>
      </AddressBar>
    </>
  );
}

function ChartPanel() {
  return (
    <Panel>
      <PanelTabs>
        {TABS.map(([t, w], i) => (
          <PanelTab key={t} $first={i === 0} $active={i === 2}><Fit w={w}>{t}</Fit></PanelTab>
        ))}
      </PanelTabs>
      <ChartRow>
        <Controls>
          <Dropdown><Fit w={160}>Legend On</Fit><DropArrow /></Dropdown>
        </Controls>
        <SceneBox><Scene /></SceneBox>
        <LegendSide>
          <ModeBar>
            <ModeGroup><ModeIcon name="camera" /></ModeGroup>
            <ModeGroup>
              <ModeIcon name="zoom" />
              <ModeIcon name="pan" />
              <ModeIcon name="orbit" />
              <ModeIcon name="turntable" on />
            </ModeGroup>
            <ModeGroup>
              <ModeIcon name="home" vw={928.6} w={39} />
              <ModeIcon name="movie" />
            </ModeGroup>
            <ModeGroup><ModeIcon name="tag" vw={1500} on /></ModeGroup>
            <ModeGroup><PlotlyMark /></ModeGroup>
          </ModeBar>
          <LegendRow>
            <LegendList>
              {SERIES.slice(0, 29).map(([name, color]) => (
                <LegendItem key={name}><Swatch $color={color} />{name}</LegendItem>
              ))}
            </LegendList>
            <LegendScroll />
          </LegendRow>
        </LegendSide>
      </ChartRow>
    </Panel>
  );
}

export default function App() {
  return (
    <Screen>
      <Global />
      <SideRail />
      <Window>
        <BrowserChrome />
        <PageRow>
          <Page>
            <Navbar>
              <Brand><Fit w={710}>AMCHSS COVID-19 Dashboard</Fit></Brand>
              {NAV.map(([t, w]) => (
                <NavItem key={t} $active={t === 'Epidemiological Parameters'}><Fit w={w}>{t}</Fit></NavItem>
              ))}
              <Share>
                <svg width="36" height="40" viewBox="0 0 36 40" fill="#333">
                  <circle cx="7.500" cy="20" r="7.500" />
                  <circle cx="28" cy="7.500" r="7.500" />
                  <circle cx="28" cy="32.500" r="7.500" />
                  <path d="M28 7.500L7.500 20L28 32.500" fill="none" stroke="#333" strokeWidth="5" />
                </svg>
              </Share>
            </Navbar>
            <Body>
              <Sidebar>
                <Para>{lines(INTRO)}</Para>
                <Bullets>
                  {BULLETS.map((rows) => (
                    <Bullet key={rows[0][0]}>
                      <BulletText>
                        {rows.map(([t, w]) => (
                          <Line key={t} $last={Boolean(w)}>{w ? <Fit w={w}>{t}</Fit> : t}</Line>
                        ))}
                      </BulletText>
                    </Bullet>
                  ))}
                </Bullets>
                <Para $italic>{lines(CFR)}</Para>
                <Para $italic $tight>{lines(INFECTED)}</Para>
              </Sidebar>
              <ChartPanel />
            </Body>
          </Page>
          <ScrollTrack>
            <ScrollArrow $h={37}><Glyph w={8} h={7} s={2.5} c="#b5b5b5" d="M1 6L4 2L7 6" /></ScrollArrow>
            <ScrollThumb />
            <ScrollArrow $h={66}><Glyph w={8} h={60} s={2.5} c="#555" d="M1 44L4 48L7 44" /></ScrollArrow>
          </ScrollTrack>
        </PageRow>
      </Window>
    </Screen>
  );
}
